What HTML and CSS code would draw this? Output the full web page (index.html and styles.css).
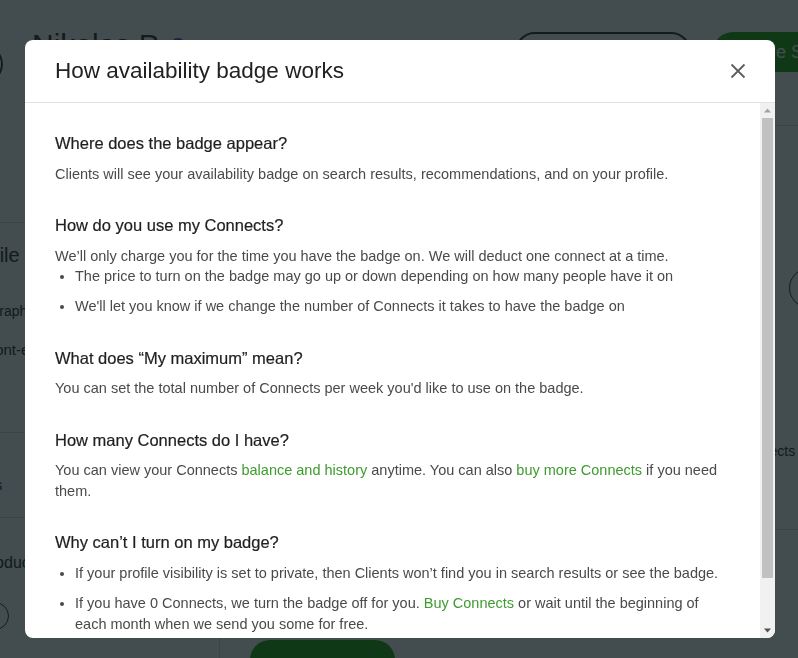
FILE: index.html
```html
<!DOCTYPE html>
<html lang="en">
<head>
<meta charset="utf-8">
<title>How availability badge works</title>
<link rel="stylesheet" href="styles.css">
</head>
<body>
<div class="page">
  <header class="top">
    <div class="avatar"></div>
    <h1 class="name">Nikolas P.</h1>
    <span class="verified"></span>
    <div class="spacer"></div>
    <button class="btn-outline">See public view</button>
    <button class="btn-green">Profile Settings</button>
  </header>
  <div class="cols">
    <aside class="side">
      <div class="side-block side-first"></div>
      <div class="side-block side-profile">
        <div class="side-title">Profile</div>
        <div class="side-line line-photo">Photography</div>
        <div class="side-line line-front">Front-end</div>
      </div>
      <div class="side-block side-hours"><div class="side-line">Hours</div></div>
      <div class="side-block side-intro">
        <div class="side-line">Introduction</div>
        <div class="side-circle"></div>
      </div>
    </aside>
    <main class="main">
      <div class="main-block main-first"></div>
      <div class="main-block main-mid"><div class="main-circle"></div></div>
      <div class="main-block main-conn"><div class="main-text">Connects</div></div>
      <div class="main-block main-last"><div class="main-bar"></div></div>
    </main>
  </div>
</div>

<div class="overlay">
  <div class="modal" role="dialog" aria-labelledby="modal-title">
    <div class="modal-header">
      <h2 id="modal-title" class="modal-title">How availability badge works</h2>
      <button class="close" aria-label="Close">
        <svg width="16" height="16" viewBox="0 0 16 16"><path d="M1.5 1.5 L14.5 14.5 M14.5 1.5 L1.5 14.5" stroke="#5e5e5e" stroke-width="1.8" fill="none"/></svg>
      </button>
    </div>
    <div class="modal-body">
      <div class="modal-content">
        <section class="faq">
          <h3>Where does the badge appear?</h3>
          <p>Clients will see your availability badge on search results, recommendations, and on your profile.</p>
        </section>
        <section class="faq">
          <h3>How do you use my Connects?</h3>
          <p>We’ll only charge you for the time you have the badge on. We will deduct one connect at a time.</p>
          <ul>
            <li>The price to turn on the badge may go up or down depending on how many people have it on</li>
            <li>We'll let you know if we change the number of Connects it takes to have the badge on</li>
          </ul>
        </section>
        <section class="faq">
          <h3>What does “My maximum” mean?</h3>
          <p>You can set the total number of Connects per week you'd like to use on the badge.</p>
        </section>
        <section class="faq">
          <h3>How many Connects do I have?</h3>
          <p>You can view your Connects <a href="#">balance and history</a> anytime. You can also <a href="#">buy more Connects</a> if you need them.</p>
        </section>
        <section class="faq">
          <h3>Why can’t I turn on my badge?</h3>
          <ul>
            <li>If your profile visibility is set to private, then Clients won’t find you in search results or see the badge.</li>
            <li>If you have 0 Connects, we turn the badge off for you. <a href="#">Buy Connects</a> or wait until the beginning of each month when we send you some for free.</li>
          </ul>
        </section>
      </div>
      <div class="scrollbar" aria-hidden="true">
        <div class="sb-btn">
          <svg width="15" height="15" viewBox="0 0 15 15"><polygon points="4,9.5 11,9.5 7.5,5.5" fill="#a3a3a3"/></svg>
        </div>
        <div class="sb-track"><div class="sb-thumb"></div></div>
        <div class="sb-btn">
          <svg width="15" height="15" viewBox="0 0 15 15"><polygon points="4,5.5 11,5.5 7.5,9.5" fill="#505050"/></svg>
        </div>
      </div>
    </div>
  </div>
</div>
</body>
</html>
```
FILE: styles.css
```css
* { box-sizing: border-box; }
html, body { margin: 0; padding: 0; }
body {
  width: 798px;
  height: 658px;
  overflow: hidden;
  background: #fff;
  font-family: "Liberation Sans", Arial, sans-serif;
  color: #222;
  position: relative;
}

/* ---------- background page ---------- */
.page { width: 798px; overflow: hidden; }
.top {
  display: flex;
  height: 104px;
}
.avatar {
  flex: none;
  width: 40px; height: 40px;
  border: 2px solid #222;
  border-radius: 50%;
  margin: 44px 0 0 -37px;
}
.name {
  flex: none;
  margin: 28px 0 0 29px;
  font-size: 30px;
  font-weight: 400;
  color: #222;
}
.verified {
  flex: none;
  width: 14px; height: 14px; border-radius: 50%;
  background: #1f57c3;
  margin: 38px 0 0 8px;
}
.spacer { flex: 1; }
.btn-outline {
  flex: none;
  margin-top: 32px;
  width: 176px; height: 40px;
  border: 2px solid #222;
  border-radius: 20px;
  background: #fff;
  color: #222;
  font: 15px "Liberation Sans", Arial, sans-serif;
}
.btn-green {
  flex: none;
  margin: 32px -90px 0 22px;
  width: 175px; height: 40px;
  border: 0;
  border-radius: 20px;
  background: #14a800;
  color: #fff;
  font: 18px "Liberation Sans", Arial, sans-serif;
  text-align: left;
  white-space: nowrap;
  padding-left: 22px;
}
.cols { display: flex; }
.side { flex: none; width: 220px; border-right: 1px solid #d5e0d5; height: 700px; }
.side-block { border-top: 1px solid #d5e0d5; }
.side-first { height: 118px; border-top: 0; }
.side-profile { height: 210px; padding-top: 21px; }
.side-title { margin-left: -37px; font-size: 20px; }
.side-line { font-size: 14px; color: #222; }
.line-photo { margin: 36px 0 0 -45px; }
.line-front { margin: 22px 0 0 -19px; font-size: 15px; }
.side-hours { height: 85px; padding-top: 44px; }
.side-hours .side-line { margin-left: -35px; }
.side-intro { padding-top: 36px; }
.side-intro .side-line { margin-left: -28px; font-size: 16px; }
.side-circle { width: 28px; height: 28px; border: 1px solid #222; border-radius: 50%; margin: 30px 0 0 -19px; }
.main { flex: 1; }
.main-block { border-top: 1px solid #d5e0d5; margin-left: 555px; }
.main-first { height: 21px; border-top: 0; }
.main-mid { height: 325px; padding-top: 142px; }
.main-circle { width: 40px; height: 40px; border: 1px solid #222; border-radius: 50%; margin-left: 14px; }
.main-conn { height: 86px; border-top: 0; }
.main-text { margin: -7px 0 0 -39px; font-size: 14px; }
.main-block.main-last { margin-left: 0; padding-top: 110px; }
.main-bar { width: 145px; height: 40px; background: #14a800; border-radius: 20px; margin-left: 30px; }

/* ---------- overlay / modal ---------- */
.overlay {
  position: fixed;
  inset: 0;
  background: rgba(14, 25, 28, 0.78);
  display: flex;
  align-items: flex-start;
  padding: 40px 0 0 25px;
}
.modal {
  width: 750px;
  height: 598px;
  background: #fff;
  border-radius: 8px;
  display: flex;
  flex-direction: column;
  overflow: hidden;
}
.modal-header {
  flex: none;
  height: 63px;
  border-bottom: 1px solid #e2e2e2;
  display: flex;
  align-items: center;
  padding: 0 29px 0 30px;
}
.modal-title {
  margin: 0;
  flex: 1;
  font-size: 22.5px;
  font-weight: 400;
  color: #222;
}
.close {
  border: 0;
  background: none;
  padding: 0;
  width: 16px;
  height: 16px;
  display: flex;
  cursor: pointer;
}
.modal-body {
  flex: 1;
  min-height: 0;
  display: flex;
}
.modal-content {
  flex: 1;
  overflow: hidden;
  padding: 28px 30px 0 30px;
}
.scrollbar {
  flex: none;
  width: 15px;
  background: #f1f1f1;
  display: flex;
  flex-direction: column;
}
.sb-btn { flex: none; height: 15px; display: flex; }
.sb-track { flex: 1; padding: 0 2px; }
.sb-thumb { height: 460px; background: #c1c1c1; }

.faq { margin-bottom: 29px; }
.faq h3 {
  margin: 0 0 8px;
  font-size: 16.5px;
  line-height: 24px;
  font-weight: 400;
  color: #1f1f1f;
  -webkit-text-stroke: 0.2px #1f1f1f;
}
.faq p, .faq li {
  margin: 0;
  font-size: 14.5px;
  line-height: 20.5px;
  color: #4a4a4a;
}
.faq p { padding-top: 0.5px; }
.faq ul { margin: 0; padding-left: 20px; }
.faq li + li { margin-top: 9.5px; }
.faq h3 + ul { margin-top: 9px; }
.faq a { color: #3d9c2e; text-decoration: none; }
```
